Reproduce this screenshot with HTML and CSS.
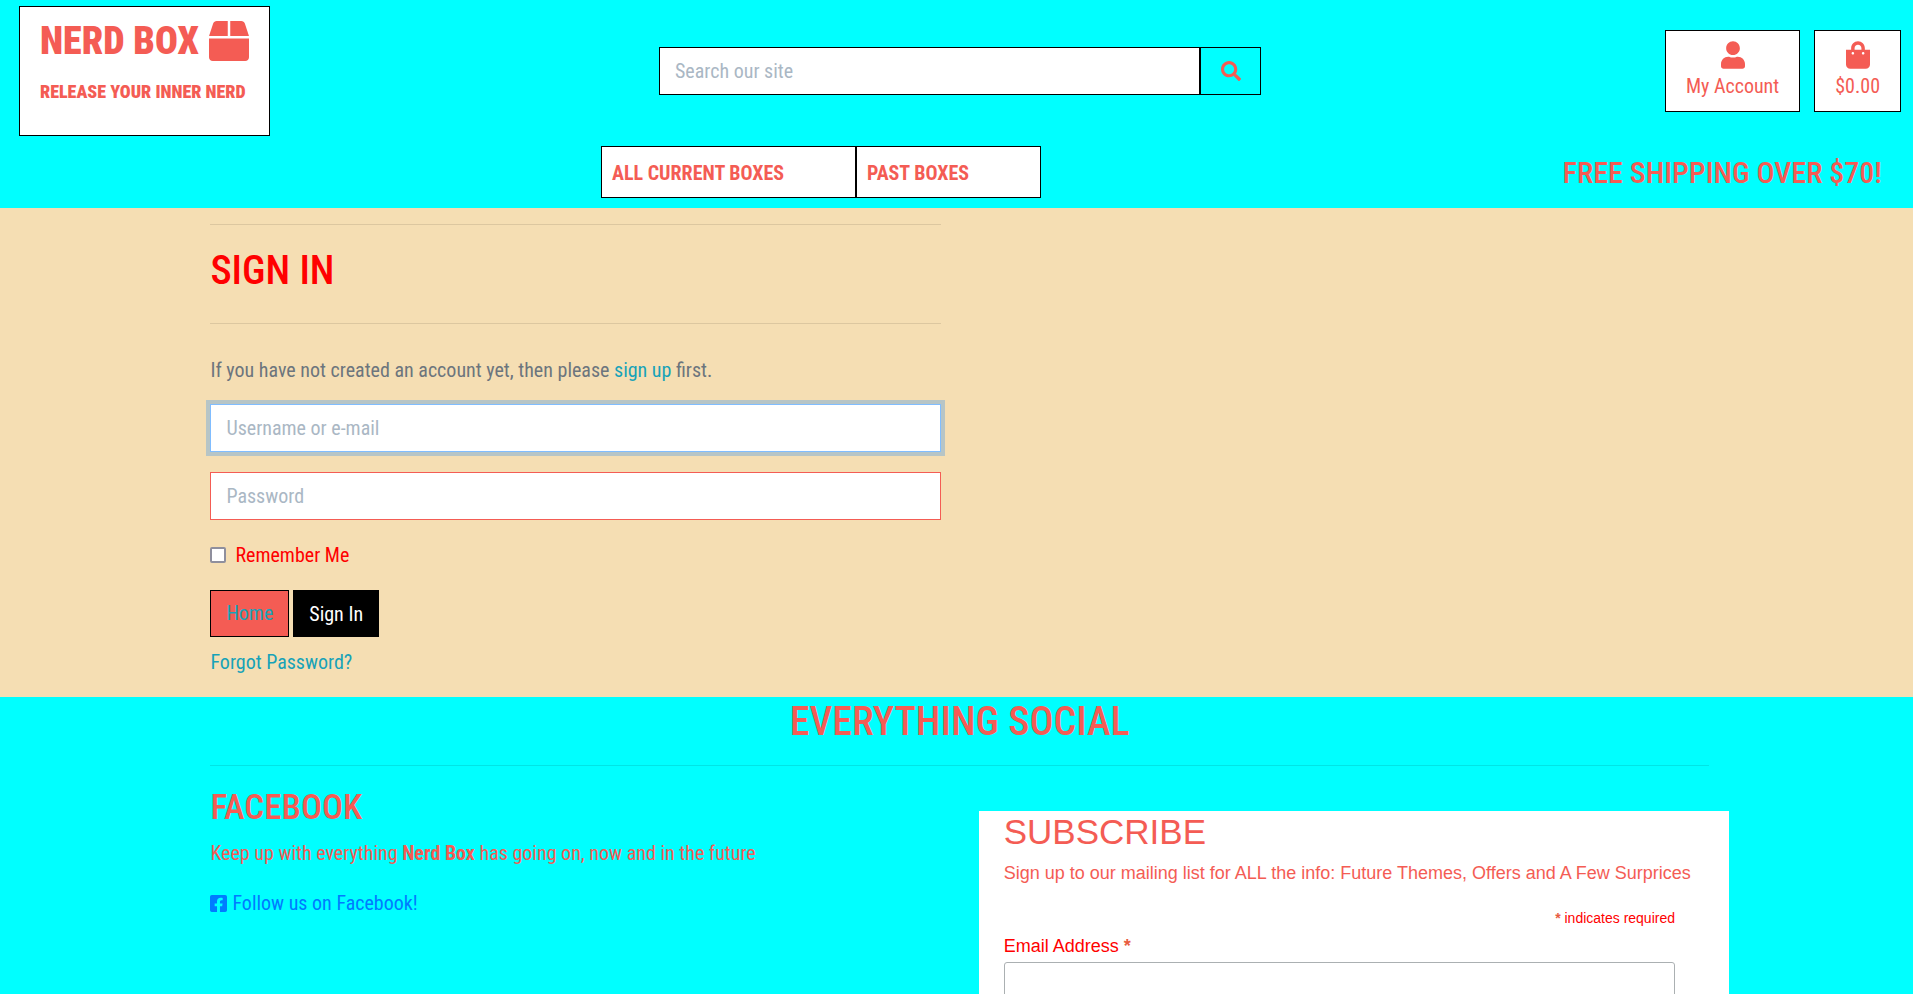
FILE: index.html
```html
<!DOCTYPE html>
<html lang="en">
<head>
<meta charset="utf-8">
<title>Nerd Box - Sign In</title>
<link rel="stylesheet" href="styles.css">
</head>
<body>
<header class="site-header">
  <div class="top-row">
    <div class="top-side">
      <a class="logo" href="#">
        <span class="logo-name">NERD BOX
          <svg class="logo-icon" viewBox="0 0 512 512" aria-hidden="true"><path d="M509.5 184.6L458.9 32.8C452.4 13.2 434.1 0 413.4 0H272v192h238.7c-.4-2.5-.4-5-1.2-7.4zM240 0H98.6c-20.7 0-39 13.2-45.5 32.8L2.5 184.6c-.8 2.4-.8 4.9-1.2 7.4H240V0zM0 224v240c0 26.5 21.5 48 48 48h416c26.5 0 48-21.5 48-48V224H0z"/></svg>
        </span>
        <span class="logo-tag">RELEASE YOUR INNER NERD</span>
      </a>
    </div>
    <form class="search">
      <input class="search-input" type="text" placeholder="Search our site" aria-label="Search our site">
      <button class="search-button" type="button" aria-label="Search">
        <svg class="search-icon" viewBox="0 0 512 512" aria-hidden="true"><path d="M505 442.7L405.3 343c-4.500-4.500-10.600-7-17-7H372c27.600-35.300 44-79.700 44-128C416 93.100 322.900 0 208 0S0 93.100 0 208s93.100 208 208 208c48.300 0 92.700-16.400 128-44v16.300c0 6.400 2.500 12.500 7 17l99.700 99.700c9.400 9.400 24.600 9.400 33.900 0l28.300-28.300c9.400-9.400 9.400-24.600.1-34zM208 336c-70.700 0-128-57.200-128-128 0-70.700 57.200-128 128-128 70.700 0 128 57.200 128 128 0 70.700-57.200 128-128 128z"/></svg>
      </button>
    </form>
    <div class="top-side top-actions">
      <a class="action" href="#">
        <svg class="action-icon" viewBox="0 0 448 512" aria-hidden="true"><path d="M224 256c70.700 0 128-57.300 128-128S294.700 0 224 0 96 57.300 96 128s57.300 128 128 128zm89.600 32h-16.700c-22.200 10.200-46.900 16-72.900 16s-50.600-5.800-72.900-16h-16.700C60.200 288 0 348.200 0 422.400V464c0 26.500 21.500 48 48 48h352c26.500 0 48-21.500 48-48v-41.600c0-74.200-60.200-134.400-134.400-134.400z"/></svg>
        <span>My Account</span>
      </a>
      <a class="action" href="#">
        <svg class="action-icon" viewBox="0 0 448 512" aria-hidden="true"><path d="M352 160v-32C352 57.420 294.579 0 224 0 153.420 0 96 57.420 96 128v32H0v272c0 44.183 35.817 80 80 80h288c44.183 0 80-35.817 80-80V160h-96zm-192-32c0-35.290 28.710-64 64-64s64 28.710 64 64v32H160v-32zm160 120c-13.255 0-24-10.745-24-24s10.745-24 24-24 24 10.745 24 24-10.745 24-24 24zm-192 0c-13.255 0-24-10.745-24-24s10.745-24 24-24 24 10.745 24 24-10.745 24-24 24z"/></svg>
        <span>$0.00</span>
      </a>
    </div>
  </div>
  <div class="nav-row">
    <nav class="main-nav">
      <a class="nav-link nav-link-wide" href="#">ALL CURRENT BOXES</a>
      <a class="nav-link" href="#">PAST BOXES</a>
    </nav>
    <h4 class="shipping">FREE SHIPPING OVER $70!</h4>
  </div>
</header>

<main class="page">
  <section class="sign-in">
    <hr class="rule">
    <h2 class="title">SIGN IN</h2>
    <hr class="rule">
    <p class="intro">If you have not created an account yet, then please <a class="info-link" href="#">sign up</a> first.</p>
    <form class="login-form">
      <input class="field" type="text" placeholder="Username or e-mail" aria-label="Username or e-mail" autofocus>
      <input class="field" type="password" placeholder="Password" aria-label="Password">
      <div class="remember">
        <input class="check" type="checkbox" id="remember">
        <label for="remember">Remember Me</label>
      </div>
      <div class="buttons">
        <a class="button button-home" href="#">Home</a>
        <button class="button button-submit" type="button">Sign In</button>
      </div>
      <a class="info-link" href="#">Forgot Password?</a>
    </form>
  </section>
</main>

<footer class="social">
  <h2 class="title social-title">EVERYTHING SOCIAL</h2>
  <hr class="rule">
  <div class="social-grid">
    <section class="facebook">
      <h3 class="subtitle">FACEBOOK</h3>
      <p class="copy">Keep up with everything <strong>Nerd Box</strong> has going on, now and in the future</p>
      <a class="follow" href="#">
        <svg class="follow-icon" viewBox="0 32 448 448" aria-hidden="true"><path d="M400 32H48A48 48 0 0 0 0 80v352a48 48 0 0 0 48 48h137.250V327.690h-63V256h63v-54.640c0-62.150 37-96.480 93.670-96.480 27.140 0 55.520 4.840 55.520 4.840v61h-31.270c-30.810 0-40.420 19.120-40.420 38.730V256h68.780l-11 71.690h-57.780V480H400a48 48 0 0 0 48-48V80a48 48 0 0 0-48-48z"/></svg>
        <span>Follow us on Facebook!</span>
      </a>
    </section>
    <form class="subscribe">
      <h3 class="subscribe-title">SUBSCRIBE</h3>
      <p class="subscribe-copy">Sign up to our mailing list for ALL the info: Future Themes, Offers and A Few Surprices</p>
      <p class="required"><span class="star">*</span> indicates required</p>
      <label class="email-label" for="email">Email Address <span class="star">*</span></label>
      <input class="email" type="email" id="email">
    </form>
  </div>
</footer>
</body>
</html>
```
FILE: styles.css
```css
* {
  box-sizing: border-box;
}

body {
  margin: 0;
  background: cyan;
  color: #f45c54;
  font-family: "Roboto Condensed", "Liberation Sans Narrow", Roboto, sans-serif;
  font-size: 20px;
  line-height: 30px;
}

h2, h3, h4, p {
  margin: 0;
}

a {
  color: inherit;
  text-decoration: none;
}

svg {
  fill: currentColor;
}

input, button {
  font: inherit;
}

input::placeholder {
  color: #aab7c4;
  opacity: 1;
}

.site-header {
  background: cyan;
}

.top-row {
  display: flex;
  align-items: center;
  padding: 6px 12px 10px 19px;
}

.top-side {
  flex: 1;
}

.logo {
  display: flex;
  flex-direction: column;
  width: 251px;
  height: 130px;
  padding: 10px 20px;
  border: 1px solid #000;
  background: #fff;
}

.logo-name {
  display: flex;
  align-items: center;
  justify-content: space-between;
  height: 48px;
  font-size: 38px;
  font-weight: 900;
  line-height: 48px;
  white-space: nowrap;
}

.logo-icon {
  width: 40px;
  height: 40px;
}

.logo-tag {
  padding-top: 12px;
  font-size: 18px;
  font-weight: 900;
  white-space: nowrap;
}

.search {
  display: flex;
  width: 602px;
  height: 48px;
}

.search-input {
  flex: 1;
  padding: 0 15px;
  border: 1px solid #000;
  border-radius: 0;
}

.search-button {
  width: 61px;
  padding: 0;
  border: 1px solid #000;
  background: cyan;
  color: #f45c54;
}

.search-icon {
  display: block;
  width: 20px;
  height: 20px;
  margin: 0 auto;
}

.top-actions {
  display: flex;
  justify-content: flex-end;
  gap: 14px;
}

.action {
  display: flex;
  flex-direction: column;
  align-items: center;
  gap: 2px;
  height: 82px;
  padding: 10px 20px;
  border: 1px solid #000;
  background: #fff;
}

.action-icon {
  width: 24px;
  height: 28px;
}

.nav-row {
  display: flex;
  justify-content: space-between;
  align-items: center;
  padding: 0 31px 10px 601px;
}

.main-nav {
  display: flex;
}

.nav-link {
  width: 185px;
  padding: 11px 10px 9px;
  border: 1px solid #000;
  background: #fff;
  font-weight: 700;
}

.nav-link-wide {
  width: 255px;
}

.shipping {
  padding-top: 2px;
  font-size: 30px;
  font-weight: 500;
  line-height: 36px;
}

.page {
  padding: 16px 11% 20px;
  background: wheat;
}

.sign-in {
  width: 731px;
}

.rule {
  margin: 0;
  border: 0;
  border-top: 1px solid rgba(0, 0, 0, 0.1);
}

.title {
  padding: 22px 0 28px;
  font-size: 40px;
  font-weight: 500;
  line-height: 48px;
}

.sign-in .title {
  color: red;
}

.intro {
  padding: 31px 0 19px;
  color: #6c757d;
}

.info-link {
  color: #17a2b8;
}

.login-form {
  display: flex;
  flex-direction: column;
  align-items: flex-start;
}

.field {
  width: 100%;
  height: 48px;
  margin-bottom: 20px;
  padding: 0 15px;
  border: 1px solid #f45c54;
  border-radius: 0;
  outline: 0;
}

.field:focus {
  border-color: #80bdff;
  box-shadow: 0 0 0 4px rgba(0, 123, 255, 0.25);
}

.remember {
  display: flex;
  align-items: center;
  gap: 9px;
  color: red;
}

.check {
  width: 16px;
  height: 16px;
  margin: 0;
  border: 2px solid #8f8f9d;
  border-radius: 2px;
  background: #fff;
  appearance: none;
}

.check:checked {
  background: #17a2b8;
}

.buttons {
  display: flex;
  gap: 4px;
  padding: 20px 0 10px;
}

.button {
  height: 47px;
  padding: 7px 15px;
  border: 1px solid #000;
  line-height: 30px;
}

.button-home {
  background: #f45c54;
  color: #17a2b8;
}

.button-submit {
  background: #000;
  color: #fff;
}

.social {
  padding: 0 204px 0 11%;
}

.social-title {
  padding: 1px 0 19px;
  text-align: center;
}

.social-grid {
  display: grid;
  grid-template-columns: 730fr 750fr;
  gap: 38px;
  margin-right: -20px;
}

.facebook {
  padding-top: 21px;
}

.subtitle {
  padding-bottom: 9px;
  font-size: 35px;
  font-weight: 500;
  line-height: 42px;
}

.copy {
  padding-bottom: 20px;
}

.follow {
  display: flex;
  align-items: center;
  gap: 5px;
  color: #007bff;
}

.follow-icon {
  width: 17px;
  height: 17px;
}

.subscribe {
  display: flex;
  flex-direction: column;
  margin-top: 45px;
  padding: 0 54px 40px 25px;
  background: #fff;
  font-family: "Liberation Sans", Arial, sans-serif;
  font-size: 18px;
}

.subscribe-title {
  font-size: 35px;
  font-weight: 400;
  line-height: 42px;
}

.subscribe-copy {
  margin-right: -40px;
  padding: 5px 0 15px;
}

.required {
  color: red;
  font-size: 14px;
  text-align: right;
}

.star {
  color: #e85c41;
  font-weight: 700;
}

.email-label {
  padding-bottom: 3px;
  color: red;
  line-height: 26px;
}

.email {
  height: 47px;
  border: 1px solid #abb0b2;
  border-radius: 3px;
}
```
